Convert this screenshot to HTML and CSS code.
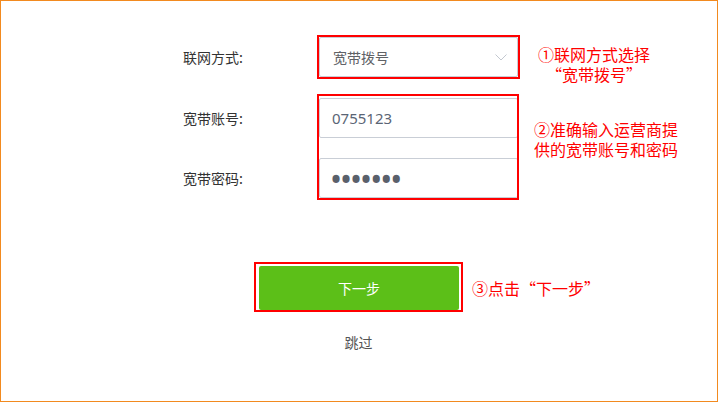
FILE: index.html
```html
<!DOCTYPE html>
<html lang="zh-CN">

<head>
    <meta charset="UTF-8">
    <meta name="viewport" content="width=device-width, initial-scale=1.0">
    <title>上网设置</title>
    <link rel="stylesheet" href="styles.css">
</head>

<body>
    <div class="frame">
        <form class="wizard">
            <!-- 联网方式 -->
            <div class="row row-mode">
                <label class="row-label" for="mode">联网方式:</label>
                <div class="mark">
                    <div class="select" id="mode">
                        <span>宽带拨号</span>
                        <svg class="chevron" width="12" height="7" viewBox="0 0 12 7">
                            <path d="M0.5 0.5 L6 6 L11.5 0.5" fill="none" stroke="#c3c8d0" stroke-width="1"/>
                        </svg>
                    </div>
                </div>
                <p class="note note-first">①联网方式选择<br><span class="indent">“宽带拨号”</span></p>
            </div>

            <!-- 账号和密码 -->
            <div class="row row-group">
                <div class="group-labels">
                    <label class="row-label" for="account">宽带账号:</label>
                    <label class="row-label" for="password">宽带密码:</label>
                </div>
                <div class="mark mark-group">
                    <input class="field" type="text" id="account" value="0755123">
                    <input class="field field-pass" type="password" id="password" value="1234567">
                </div>
                <p class="note note-second">②准确输入运营商提<br>供的宽带账号和密码</p>
            </div>

            <!-- 下一步 -->
            <div class="row row-action">
                <div class="action">
                    <div class="mark mark-btn">
                        <button type="button" class="btn-next">下一步</button>
                    </div>
                    <a class="skip" href="#">跳过</a>
                </div>
                <p class="note note-third">③点击“下一步”</p>
            </div>
        </form>
    </div>
</body>

</html>
```

FILE: styles.css
```css
/* General Reset */
* {
    margin: 0;
    padding: 0;
    box-sizing: border-box;
}

body {
    background: #fff;
    font-family: 'Noto Sans CJK SC', 'Noto Sans', sans-serif;
    font-size: 14px;
    color: #333;
}

/* Outer frame */
.frame {
    width: 718px;
    height: 402px;
    border: 1px solid #f28a1f;
    padding: 34px 0 0 182px;
}

.row {
    display: flex;
    align-items: center;
}

.row-mode {
    align-items: flex-start;
    height: 44px;
}

.row-mode .row-label {
    height: 44px;
}

.row-label {
    display: flex;
    align-items: center;
    width: 134px;
    height: 40px;
    font-size: 14px;
    color: #333;
}

/* Red highlight boxes */
.mark {
    border: 2px solid #f00;
}

.select {
    display: flex;
    align-items: center;
    justify-content: space-between;
    width: 199px;
    height: 40px;
    padding: 0 10px 0 13px;
    border: 1px solid #c9ced6;
    border-radius: 2px;
    color: #606266;
    font-size: 14px;
}

.chevron {
    margin-top: 1px;
}

/* Account & password */
.row-group {
    align-items: flex-start;
    margin-top: 15px;
}

.group-labels {
    display: flex;
    flex-direction: column;
    gap: 20px;
    padding-top: 4px;
}

.mark-group {
    display: flex;
    flex-direction: column;
    gap: 20px;
    width: 202px;
    padding-top: 2px;
    overflow: hidden;
}

.field {
    width: 199px;
    height: 40px;
    padding: 0 12px;
    border: 1px solid #c9ced6;
    border-radius: 2px;
    color: #5a6575;
    font-family: 'Noto Sans', sans-serif;
    font-size: 15px;
    outline: none;
}

.field-pass {
    font-size: 32px;
    letter-spacing: -2px;
    color: #5a606b;
    padding-left: 10px;
}

/* Notes */
.note {
    color: #f00;
    font-size: 16px;
    line-height: 20px;
    align-self: flex-start;
}

.note-first {
    margin: 9px 0 0 18px;
}

.note .indent {
    padding-left: 8px;
}

.note-second {
    margin: 25px 0 0 15px;
}

/* Next step */
.row-action {
    align-items: flex-start;
    margin-top: 62px;
    padding-left: 71px;
}

.action {
    display: flex;
    flex-direction: column;
    align-items: center;
}

.mark-btn {
    padding: 2px 2px 0 3px;
}

.btn-next {
    display: block;
    width: 200px;
    height: 44px;
    border: none;
    border-radius: 2px;
    background: #5cbf18;
    color: #fff;
    font-family: 'Noto Sans CJK SC', sans-serif;
    font-size: 14px;
    cursor: pointer;
}

.skip {
    margin-top: 20px;
    line-height: 20px;
    color: #555;
    text-decoration: none;
}

.note-third {
    margin: 16px 0 0 9px;
}
```
